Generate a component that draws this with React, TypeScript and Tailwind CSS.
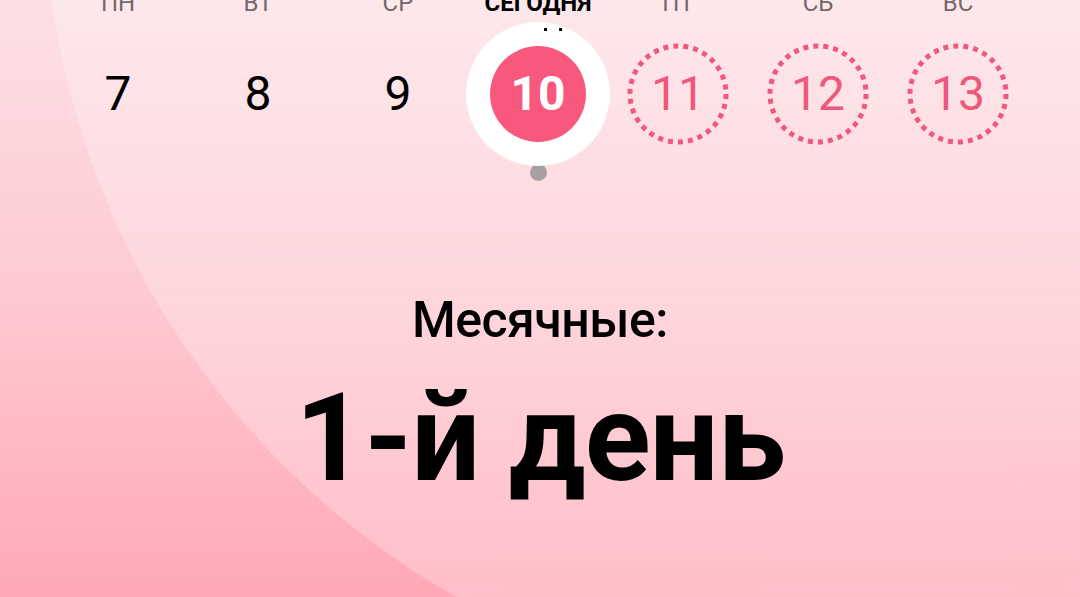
import React from 'react'

type Day = { label: string; num: number; kind: 'past' | 'today' | 'future' }

const DAYS: Day[] = [
  { label: 'ПН', num: 7, kind: 'past' },
  { label: 'ВТ', num: 8, kind: 'past' },
  { label: 'СР', num: 9, kind: 'past' },
  { label: 'СЕГОДНЯ', num: 10, kind: 'today' },
  { label: 'ПТ', num: 11, kind: 'future' },
  { label: 'СБ', num: 12, kind: 'future' },
  { label: 'ВС', num: 13, kind: 'future' },
]

function DayCell({ day }: { day: Day }) {
  if (day.kind === 'today') {
    return (
      <div className="relative w-[144px] h-[144px] rounded-full bg-white flex items-center justify-center">
        <span className="absolute left-[78px] top-[6px] w-[3px] h-[3px] bg-black" />
        <span className="absolute left-[93px] top-[6px] w-[3px] h-[3px] bg-black" />
        <div className="w-[96px] h-[96px] rounded-full bg-[#f8587c] flex items-center justify-center">
          <span className="text-white text-[48px] font-bold leading-none">{day.num}</span>
        </div>
      </div>
    )
  }
  if (day.kind === 'future') {
    return (
      <div className="relative w-[102px] h-[102px] flex items-center justify-center">
        <svg className="absolute inset-0" width="102" height="102" viewBox="0 0 102 102">
          <circle
            cx="51"
            cy="51"
            r="48"
            fill="none"
            stroke="#f0587d"
            strokeWidth="5"
            strokeDasharray="5 5.05"
          />
        </svg>
        <span className="text-[#f0577c] text-[48px] leading-none">{day.num}</span>
      </div>
    )
  }
  return <span className="text-black text-[48px] leading-none">{day.num}</span>
}

export default function App() {
  return (
    <div
      className="relative w-[1080px] h-[597px] overflow-hidden bg-gradient-to-b from-[#fce0e5] via-[#fec9d1] to-[#ffa8b6]"
      style={{ fontFamily: 'Roboto, "Noto Sans", sans-serif' }}
    >
      {/* big light circle */}
      <div className="absolute left-[44px] top-[-928px] w-[1632px] h-[1632px] rounded-full bg-white/25" />

      <div className="relative">
        <div className="grid grid-cols-7 w-[980px] ml-[48px]">
          {DAYS.map((d) => (
            <div key={d.num} className="flex flex-col items-center">
              <div
                className={`mt-[-9px] h-[24px] text-[24px] leading-[24px] whitespace-nowrap ${
                  d.kind === 'today' ? 'font-bold text-black' : 'text-[#73666c]'
                }`}
              >
                {d.label}
              </div>
              <div className="mt-[7px] h-[144px] flex items-center justify-center">
                <DayCell day={d} />
              </div>
              <div className="mt-[-3px] h-[18px] w-[18px] flex items-center justify-center">
                {d.kind === 'today' && <span className="w-[17px] h-[17px] rounded-full bg-[#a99ea3]" />}
              </div>
            </div>
          ))}
        </div>

        <div className="mt-[114px] text-center text-[50px] leading-[50px] font-medium text-black tracking-[-0.5px]">
          Месячные:
        </div>
        <div className="mt-[33px] text-center text-[122px] leading-[122px] font-bold text-black tracking-[-1px]">
          1-й день
        </div>
      </div>
    </div>
  )
}
